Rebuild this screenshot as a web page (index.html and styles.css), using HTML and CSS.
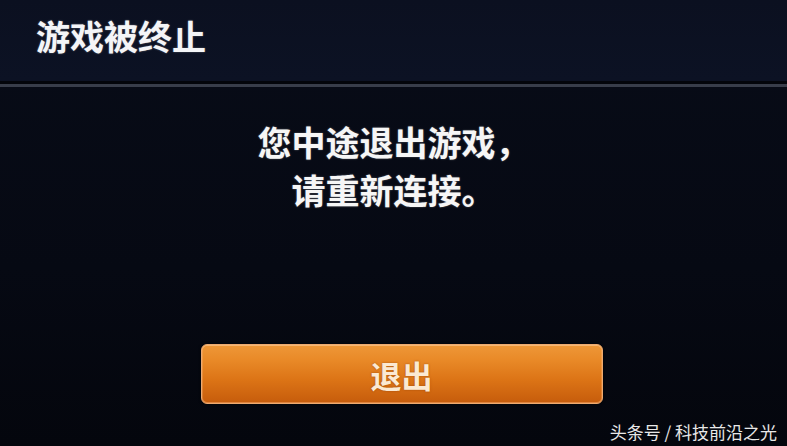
FILE: index.html
```html
<!DOCTYPE html>
<html lang="zh-CN">
<head>
<meta charset="utf-8">
<title>游戏被终止</title>
<link rel="stylesheet" href="styles.css">
</head>
<body>
<div class="dialog">
  <header class="dialog-head">
    <h1 class="dialog-title">游戏被终止</h1>
  </header>
  <div class="dialog-rule"></div>
  <main class="dialog-body">
    <p class="dialog-message">您中途退出游戏，<br>请重新连接。</p>
    <button class="btn-exit" type="button">退出</button>
  </main>
  <div class="watermark">头条号 / 科技前沿之光</div>
</div>
</body>
</html>
```

FILE: styles.css
```css
html, body {
  margin: 0;
  padding: 0;
}

body {
  background: #070a14;
  font-family: "Noto Sans CJK SC", "Noto Sans", sans-serif;
  color: #ffffff;
}

.dialog {
  position: relative;
  width: 787px;
  height: 446px;
  overflow: hidden;
  background: linear-gradient(180deg, #080c18 0%, #060913 60%, #04060d 100%);
}

.dialog-head {
  height: 81px;
  box-sizing: border-box;
  padding: 19px 0 0 36px;
  background: linear-gradient(180deg, #0b1020 0%, #0c1224 100%);
}

.dialog-title {
  margin: 0;
  font-size: 34px;
  line-height: 34px;
  font-weight: 700;
  color: #f4f5f7;
  text-shadow: 0 0 2px rgba(255, 255, 255, 0.35);
}

.dialog-rule {
  height: 3px;
  background: #03050b;
  border-bottom: 3px solid #383d4a;
}

.dialog-body {
  display: flex;
  flex-direction: column;
  align-items: center;
}

.dialog-message {
  margin: 31px 0 0;
  font-size: 34px;
  line-height: 48px;
  font-weight: 700;
  text-align: center;
  color: #f6f6f6;
  text-shadow: 0 0 2px rgba(255, 255, 255, 0.35);
}

.btn-exit {
  margin-top: 130px;
  margin-left: 16px;
  width: 402px;
  height: 60px;
  border: 1px solid #eeaa70;
  border-radius: 6px;
  background: linear-gradient(180deg, #ee9738 0%, #e98a28 25%, #dc7416 60%, #c65c0c 100%);
  box-shadow: inset 0 1px 0 rgba(255, 210, 160, 0.55), inset 0 -1px 0 rgba(255, 180, 120, 0.45), inset 1px 0 0 rgba(255, 190, 130, 0.3), inset -1px 0 0 rgba(255, 190, 130, 0.3), 0 0 3px rgba(0, 0, 0, 0.8);
  font-family: "Noto Sans CJK SC", sans-serif;
  font-size: 31px;
  font-weight: 700;
  color: #fbe9d2;
  text-shadow: 0 0 2px rgba(120, 50, 0, 0.6);
  padding: 0;
  cursor: pointer;
}

.watermark {
  position: absolute;
  right: 10px;
  bottom: 2px;
  font-size: 17px;
  line-height: 24px;
  color: #e8e8e8;
  font-weight: 400;
}
```
